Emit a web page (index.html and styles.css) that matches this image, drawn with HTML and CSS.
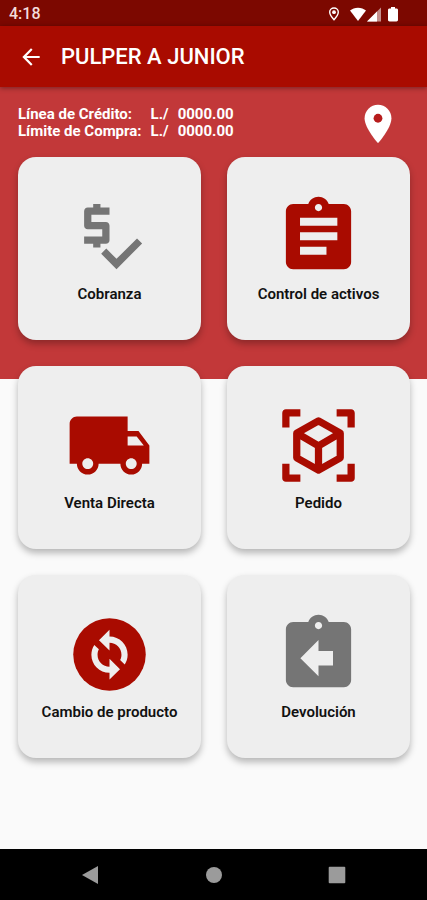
FILE: index.html
```html
<!DOCTYPE html>
<html lang="es">
<head>
<meta charset="utf-8">
<meta name="viewport" content="width=device-width, initial-scale=1">
<title>PULPER A JUNIOR</title>
<link rel="stylesheet" href="styles.css">
</head>
<body>
<div class="status-bar">
  <time class="clock">4:18</time>
  <div class="status-icons">
    <svg class="status-pin" viewBox="0 0 12 16"><path d="M6 2C3.500 2 1.700 3.800 1.700 6.100c0 3 4.300 7.700 4.300 7.700s4.300-4.700 4.300-7.700C10.300 3.800 8.500 2 6 2z" fill="none" stroke="currentColor" stroke-width="1.400"/><circle cx="6" cy="6.200" r="1.900"/></svg>
    <svg class="status-wifi" viewBox="0 0 18 16"><path d="M9 15L1 4.600C3.100 2.700 5.900 1.700 9 1.700s5.900 1 8 2.900z"/></svg>
    <svg class="status-signal" viewBox="0 0 15 16"><path d="M0 15.500L14 1.500v14z" opacity=".55"/><path d="M0 15.500L10 5.500v10z"/></svg>
    <svg class="status-battery" viewBox="0 0 10 16"><path d="M3 1h4v1.500h1.500c.8 0 1.500.6 1.500 1.400v10.200c0 .8-.7 1.400-1.500 1.400h-7C.7 15.500 0 14.900 0 14.100V3.900c0-.8.7-1.400 1.500-1.400H3z"/></svg>
  </div>
</div>
<header class="app-bar">
  <button class="icon-button" type="button" aria-label="Atrás">
    <svg class="back-icon" viewBox="0 0 24 24"><path d="M20 11H7.830l5.590-5.590L12 4l-8 8 8 8 1.410-1.410L7.830 13H20v-2z"/></svg>
  </button>
  <h1 class="title">PULPER A JUNIOR</h1>
</header>
<main class="content">
  <section class="summary">
    <dl class="limits">
      <dt>Línea de Crédito:</dt><dd>L./</dd><dd>0000.00</dd>
      <dt>Límite de Compra:</dt><dd>L./</dd><dd>0000.00</dd>
    </dl>
    <button class="icon-button" type="button" aria-label="Ubicación">
      <svg class="location-icon" viewBox="0 0 24 24"><path d="M12 2C8.130 2 5 5.130 5 9c0 5.250 7 13 7 13s7-7.750 7-13c0-3.870-3.130-7-7-7z"/><circle class="location-dot" cx="12" cy="9" r="2.300"/></svg>
    </button>
  </section>
  <nav class="menu">
    <button class="card" type="button">
      <svg class="card-icon muted" viewBox="0 0 24 24"><path d="M12 13V9c0-.55-.45-1-1-1H7V6h5V4H9.500V3h-2v1H6c-.55 0-1 .45-1 1v4c0 .55.45 1 1 1h4v2H5v2h2.500v1h2v-1H11c.55 0 1-.45 1-1z"/><path d="M19.590 12.520l-5.660 5.650-2.820-2.830-1.410 1.420L13.930 21 21 13.930z"/></svg>
      <span class="card-label">Cobranza</span>
    </button>
    <button class="card" type="button">
      <svg class="card-icon" viewBox="0 0 24 24"><path d="M19 3h-4.180C14.400 1.840 13.300 1 12 1c-1.300 0-2.400.84-2.820 2H5c-1.100 0-2 .9-2 2v14c0 1.100.9 2 2 2h14c1.100 0 2-.9 2-2V5c0-1.100-.9-2-2-2zm-7 0c.55 0 1 .45 1 1s-.45 1-1 1-1-.45-1-1 .45-1 1-1zm2.200 14H6.900v-2.200h7.300V17zm3-4H6.900v-2.200h10.300V13zm0-4H6.900V6.800h10.300V9z"/></svg>
      <span class="card-label">Control de activos</span>
    </button>
    <button class="card" type="button">
      <svg class="card-icon" viewBox="0 0 24 24"><path d="M20 8h-3V4H3c-1.100 0-2 .9-2 2v11h2c0 1.660 1.340 3 3 3s3-1.340 3-3h6c0 1.660 1.340 3 3 3s3-1.340 3-3h2v-5l-3-4zM6 18.500c-.83 0-1.500-.67-1.500-1.500s.67-1.500 1.500-1.500 1.500.67 1.500 1.500-.67 1.500-1.500 1.500zm13.500-9l1.960 2.500H17V9.500h2.500zm-1.500 9c-.83 0-1.500-.67-1.500-1.500s.67-1.500 1.500-1.500 1.500.67 1.500 1.500-.67 1.500-1.500 1.500z"/></svg>
      <span class="card-label">Venta Directa</span>
    </button>
    <button class="card" type="button">
      <svg class="card-icon" viewBox="0 0 24 24"><path d="M3 2h4v2H4v3H2V3c0-.55.45-1 1-1zM17 2h4c.55 0 1 .45 1 1v4h-2V4h-3zM2 17h2v3h3v2H3c-.55 0-1-.45-1-1zM20 17h2v4c0 .55-.45 1-1 1h-4v-2h3z"/><path d="M12 5.200L18 8.600v6.800l-6 3.400-6-3.400V8.600zM6 8.600l6 3.500 6-3.500M12 12.100v6.700" fill="none" stroke="currentColor" stroke-width="2" stroke-linejoin="round"/></svg>
      <span class="card-label">Pedido</span>
    </button>
    <button class="card" type="button">
      <svg class="card-icon" viewBox="0 0 24 24"><circle cx="12" cy="12" r="10"/><path class="cutout" d="M12 5.200v1.850c2.760 0 5 2.240 5 5 0 1-.3 1.920-.8 2.700l-1.270-1.200c.24-.45.370-.97.370-1.500 0-1.820-1.480-3.300-3.300-3.300V10.900L9.100 8.050zM12 18.900v-1.850c-2.760 0-5-2.240-5-5 0-1 .3-1.920.8-2.700l1.270 1.200c-.24.45-.37.970-.37 1.500 0 1.820 1.480 3.300 3.300 3.300V13.200l2.900 2.850z"/></svg>
      <span class="card-label">Cambio de producto</span>
    </button>
    <button class="card" type="button">
      <svg class="card-icon muted" viewBox="0 0 24 24"><path d="M19 3h-4.180C14.400 1.840 13.300 1 12 1s-2.400.84-2.820 2H5c-1.100 0-2 .9-2 2v14c0 1.100.9 2 2 2h14c1.100 0 2-.9 2-2V5c0-1.100-.9-2-2-2zm-7 0c.55 0 1 .45 1 1s-.45 1-1 1-1-.45-1-1 .45-1 1-1zm4 12h-4v3l-5-5 5-5v3h4v4z"/></svg>
      <span class="card-label">Devolución</span>
    </button>
  </nav>
</main>
<footer class="system-nav">
  <button class="icon-button" type="button" aria-label="Volver"><svg class="nav-icon" viewBox="0 0 18 18"><path d="M17 0v18L1 9z"/></svg></button>
  <button class="icon-button" type="button" aria-label="Inicio"><svg class="nav-icon" viewBox="0 0 18 18"><circle cx="9" cy="9" r="8"/></svg></button>
  <button class="icon-button" type="button" aria-label="Recientes"><svg class="nav-icon" viewBox="0 0 18 18"><rect x=".7" y=".7" width="16.600" height="16.600" rx="1"/></svg></button>
</footer>
</body>
</html>
```

FILE: styles.css
```css
:root {
  --brand: #a90b00;
  --brand-dark: #7c0800;
  --brand-light: #c23839;
  --surface: #eeeeee;
  --page: #fafafa;
  --muted: #757575;
}

* {
  box-sizing: border-box;
}

body {
  margin: 0;
  min-height: 100vh;
  display: flex;
  flex-direction: column;
  background: var(--page);
  font-family: Roboto, "Liberation Sans", sans-serif;
}

svg {
  display: block;
  fill: currentColor;
}

button {
  border: 0;
  padding: 0;
  font: inherit;
  color: inherit;
  cursor: pointer;
}

.icon-button {
  background: none;
}

.status-bar {
  display: flex;
  align-items: center;
  justify-content: space-between;
  height: 26px;
  padding: 2px 29px 0 9px;
  background: var(--brand-dark);
  color: #fff;
}

.clock {
  font-size: 16px;
  line-height: 24px;
  color: #f3dcdb;
  font-weight: 500;
}

.status-icons {
  display: flex;
  align-items: center;
}

.status-icons svg {
  height: 16px;
}

.status-pin {
  width: 12px;
  margin-right: 9px;
}

.status-wifi {
  width: 18px;
}

.status-signal {
  width: 15px;
  margin-right: 6px;
}

.status-battery {
  width: 10px;
}

.app-bar {
  position: relative;
  display: flex;
  align-items: center;
  gap: 17px;
  height: 61px;
  padding: 1px 18px 0;
  background: var(--brand);
  color: #fff;
  box-shadow: 0 1px 5px rgba(0, 0, 0, 0.4);
}

.back-icon {
  width: 26px;
  height: 26px;
}

.title {
  margin: 0;
  font-size: 22px;
  line-height: 28px;
  font-weight: 500;
}

.content {
  flex: 1;
  padding: 14px 17px 24px 18px;
  background: linear-gradient(var(--brand-light) 292px, var(--page) 292px);
}

.summary {
  display: flex;
  justify-content: space-between;
  align-items: flex-start;
  height: 56px;
  padding-right: 9px;
  color: #fff;
}

.limits {
  display: grid;
  grid-template-columns: auto auto auto;
  column-gap: 9px;
  margin: 5px 0 0;
  font-size: 15px;
  line-height: 17px;
  font-weight: 700;
}

.limits dd {
  margin: 0;
}

.location-icon {
  width: 46px;
  height: 46px;
}

.location-dot {
  fill: #b71c1c;
}

.menu {
  display: grid;
  grid-template-columns: 1fr 1fr;
  gap: 26px;
}

.card {
  display: flex;
  flex-direction: column;
  align-items: center;
  justify-content: center;
  gap: 6px;
  aspect-ratio: 1;
  padding-bottom: 2px;
  border-radius: 18px;
  background: var(--surface);
  color: var(--brand);
  box-shadow: 0 4px 7px rgba(0, 0, 0, 0.28);
}

.card-icon {
  width: 87px;
  height: 87px;
}

.muted {
  color: var(--muted);
}

.cutout {
  fill: var(--surface);
}

.card-label {
  font-size: 15px;
  line-height: 16px;
  font-weight: 600;
  color: #111;
}

.system-nav {
  display: flex;
  justify-content: space-between;
  align-items: center;
  height: 51px;
  padding: 0 81px;
  background: #000;
  color: #9b9b9b;
}

.nav-icon {
  width: 18px;
  height: 18px;
}
```
